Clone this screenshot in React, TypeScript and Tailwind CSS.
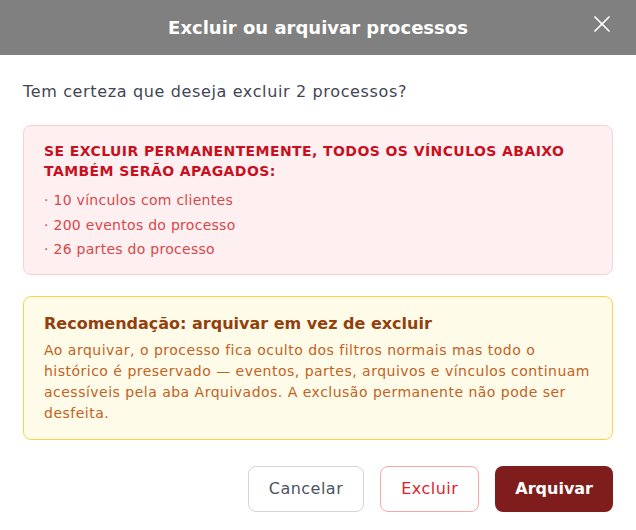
import React from 'react';
import { X } from 'lucide-react';

const font = { fontFamily: '"DejaVu Sans", "Open Sans", sans-serif' };

const App = () => {
  const vinculos = [
    '10 vínculos com clientes',
    '200 eventos do processo',
    '26 partes do processo',
  ];

  return (
    <div className="w-[636px] h-[530px] bg-white flex flex-col" style={font}>
      <div className="h-[55px] bg-[#808080] flex items-center justify-center relative">
        <h2 className="text-[18px] font-bold text-white">Excluir ou arquivar processos</h2>
        <button className="absolute right-[20px] top-[10px] text-white">
          <X size={28} strokeWidth={1.5} />
        </button>
      </div>

      <div className="px-[23px] pt-[25px] flex flex-col">
        <p className="text-[16px] leading-6 text-[#3f4654] tracking-[0.04em]">
          Tem certeza que deseja excluir 2 processos?
        </p>

        <div className="mt-[21px] rounded-lg border border-[#fbcfd4] bg-[#fef0f1] px-5 pt-[15px] pb-[13px]">
          <p className="text-[14px] leading-5 font-bold uppercase text-[#c8101f] tracking-[0.03em]">
            Se excluir permanentemente, todos os vínculos abaixo também serão apagados:
          </p>
          <ul className="mt-[7px] flex flex-col gap-[0.5px]">
            {vinculos.map((v) => (
              <li key={v} className="text-[14px] leading-6 text-[#d9474a] tracking-[0.02em]">
                · {v}
              </li>
            ))}
          </ul>
        </div>

        <div className="mt-[21px] rounded-lg border border-[#fcd34d] bg-[#fffbe9] px-5 pt-[15px] pb-[15px]">
          <p className="text-[16px] leading-6 font-semibold text-[#92400e]">
            Recomendação: arquivar em vez de excluir
          </p>
          <p className="mt-[4px] text-[14px] leading-[21px] text-[#c2621f] tracking-[0.035em]">
            Ao arquivar, o processo fica oculto dos filtros normais mas todo o histórico é preservado — eventos,
            partes, arquivos e vínculos continuam acessíveis pela aba Arquivados. A exclusão permanente não pode
            ser desfeita.
          </p>
        </div>

        <div className="mt-[26px] flex justify-end gap-4">
          <button className="h-[46px] px-5 rounded-lg border border-[#d1d5db] bg-white text-[16px] text-[#4b5563] tracking-[0.03em]">
            Cancelar
          </button>
          <button className="h-[46px] px-5 rounded-lg border border-[#fca5a5] bg-white text-[16px] text-[#e11d2e] tracking-[0.03em]">
            Excluir
          </button>
          <button className="h-[46px] px-5 rounded-lg bg-[#7f1d1d] text-[16px] font-bold text-white">
            Arquivar
          </button>
        </div>
      </div>
    </div>
  );
};

export default App;
